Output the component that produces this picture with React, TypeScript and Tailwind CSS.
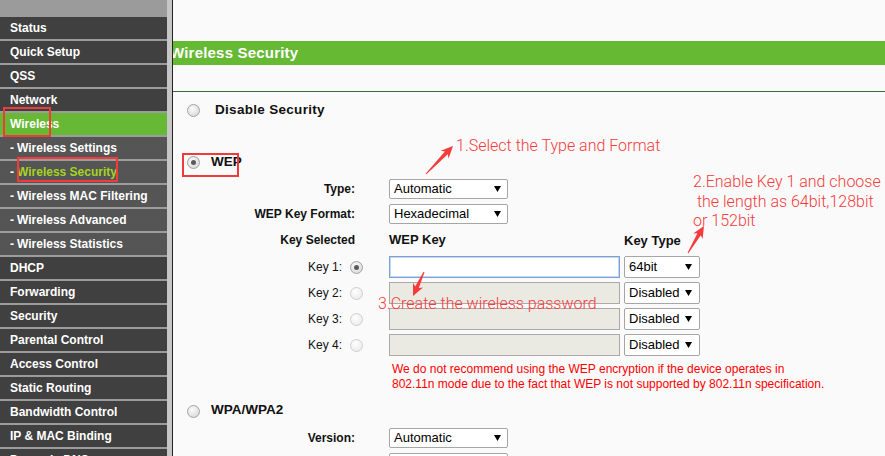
import React from "react";

type Pt = [number, number];

function arrowPoints(t: Pt, h: Pt): string {
  const [x1, y1] = t;
  const [x2, y2] = h;
  const dx = x2 - x1;
  const dy = y2 - y1;
  const L = Math.hypot(dx, dy);
  const ux = dx / L;
  const uy = dy / L;
  const px = -uy;
  const py = ux;
  const headLen = 12;
  const headW = 5.5;
  const neckW = 2;
  const tailW = 0.5;
  const nx = x2 - ux * headLen * 0.8;
  const ny = y2 - uy * headLen * 0.8;
  const bx = x2 - ux * headLen;
  const by = y2 - uy * headLen;
  const pts: Pt[] = [
    [x1 + px * tailW, y1 + py * tailW],
    [nx + px * neckW, ny + py * neckW],
    [bx + px * headW, by + py * headW],
    [x2, y2],
    [bx - px * headW, by - py * headW],
    [nx - px * neckW, ny - py * neckW],
    [x1 - px * tailW, y1 - py * tailW],
  ];
  return pts.map((p) => `${p[0].toFixed(1)},${p[1].toFixed(1)}`).join(" ");
}

function Radio({ checked, light }: { checked?: boolean; light?: boolean }) {
  return (
    <span
      className={
        light
          ? "w-[13px] h-[13px] rounded-full border border-[#cfcfcf] bg-[radial-gradient(circle_at_40%_35%,#ffffff,#e6e6e6)] flex items-center justify-center shrink-0"
          : "w-[13px] h-[13px] rounded-full border border-[#a4a4a4] bg-[radial-gradient(circle_at_40%_35%,#fbfbfb,#d2d2d2)] flex items-center justify-center shrink-0"
      }
    >
      {checked && <span className="w-[5px] h-[5px] rounded-full bg-[#5a5a5a]" />}
    </span>
  );
}

function Caret() {
  return (
    <svg width="7" height="6" viewBox="0 0 7 6" className="shrink-0">
      <path d="M0 0H7L3.5 6Z" fill="#000" />
    </svg>
  );
}

function BigSelect({ value }: { value: string }) {
  return (
    <div className="ml-[34px] w-[119px] h-[20px] bg-white border border-[#a6a6a6] rounded-[2px] flex items-center justify-between pl-[4px] pr-[6px] text-[13px] text-black">
      <span>{value}</span>
      <Caret />
    </div>
  );
}

function SmallSelect({ value }: { value: string }) {
  return (
    <div className="ml-[4px] w-[76px] h-[22px] bg-white border border-[#a6a6a6] rounded-[2px] flex items-center justify-between pl-[4px] pr-[7px] text-[13px] text-black">
      <span>{value}</span>
      <Caret />
    </div>
  );
}

const menu: { label: string; kind: "main" | "sub"; active?: boolean }[] = [
  { label: "Status", kind: "main" },
  { label: "Quick Setup", kind: "main" },
  { label: "QSS", kind: "main" },
  { label: "Network", kind: "main" },
  { label: "Wireless", kind: "main", active: true },
  { label: "Wireless Settings", kind: "sub" },
  { label: "Wireless Security", kind: "sub", active: true },
  { label: "Wireless MAC Filtering", kind: "sub" },
  { label: "Wireless Advanced", kind: "sub" },
  { label: "Wireless Statistics", kind: "sub" },
  { label: "DHCP", kind: "main" },
  { label: "Forwarding", kind: "main" },
  { label: "Security", kind: "main" },
  { label: "Parental Control", kind: "main" },
  { label: "Access Control", kind: "main" },
  { label: "Static Routing", kind: "main" },
  { label: "Bandwidth Control", kind: "main" },
  { label: "IP & MAC Binding", kind: "main" },
  { label: "Dynamic DNS", kind: "main" },
];

function MenuRow({ item }: { item: (typeof menu)[number] }) {
  if (item.kind === "main") {
    return (
      <div
        className={
          item.active
            ? "h-[24px] shrink-0 border-b-2 border-[#9c9c9c] bg-[#67b834] flex items-center pl-[10px] text-[12px] font-bold text-white"
            : "h-[24px] shrink-0 border-b-2 border-[#9c9c9c] bg-[#404040] flex items-center pl-[10px] text-[12px] font-bold text-white"
        }
      >
        {item.label}
      </div>
    );
  }
  return (
    <div className="h-[24px] shrink-0 border-b-2 border-[#9c9c9c] bg-[#555555] flex items-center pl-[10px] text-[12px] font-bold text-white whitespace-nowrap">
      <span className="mr-[3px]">-</span>
      <span className={item.active ? "text-[#a6d323]" : "text-white"}>{item.label}</span>
    </div>
  );
}

function KeyRow({ n, first }: { n: number; first?: boolean }) {
  return (
    <div className="h-[26px] shrink-0 flex items-center">
      <div className="w-[169px] text-right text-[12px] text-[#111]">Key {n}:</div>
      <span className="ml-[8px]">
        <Radio checked={first} light={!first} />
      </span>
      <div
        className={
          first
            ? "ml-[26px] w-[231px] h-[22px] bg-white border border-[#7da2d6] ring-1 ring-inset ring-[#c3d5ef]"
            : "ml-[26px] w-[231px] h-[22px] bg-[#eae9e2] border border-[#aaaaaa]"
        }
      />
      <SmallSelect value={first ? "64bit" : "Disabled"} />
    </div>
  );
}

export default function App() {
  const red = "#f53b3b";
  return (
    <div className="relative w-[885px] h-[456px] overflow-hidden flex font-['Liberation_Sans',Arial,sans-serif] bg-[#fafafa]">
      {/* Sidebar */}
      <div className="w-[167px] shrink-0 bg-[#9b9b9b] pt-[17px] flex flex-col overflow-hidden">
        {menu.map((m) => (
          <MenuRow key={m.label} item={m} />
        ))}
      </div>
      <div className="w-[5px] shrink-0 bg-[#c6c6c6]" />
      <div className="w-px shrink-0 bg-[#222222]" />

      {/* Content */}
      <div className="flex-1 flex flex-col overflow-hidden bg-[#fafafa]">
        <div className="h-[41px] shrink-0" />
        <div className="h-[24px] shrink-0 bg-[#66b933] flex items-center overflow-hidden">
          <span className="ml-[-3px] text-[15px] font-bold text-white whitespace-nowrap tracking-[0.2px]">Wireless Security</span>
        </div>
        <div className="h-[26px] shrink-0" />
        <div className="h-px shrink-0 bg-[#3a6b3e]" />

        <div className="mt-[6px] h-[24px] shrink-0 flex items-center pl-[14px]">
          <Radio />
          <span className="ml-[15px] text-[13.5px] font-bold text-[#111] tracking-[0.3px]">Disable Security</span>
        </div>

        <div className="mt-[28px] h-[24px] shrink-0 flex items-center pl-[14px]">
          <Radio checked />
          <span className="ml-[11px] text-[13.5px] font-bold text-[#111]">WEP</span>
        </div>

        <div className="mt-[2px] h-[25px] shrink-0 flex items-center">
          <div className="w-[182px] text-right text-[12px] font-bold text-[#111]">Type:</div>
          <BigSelect value="Automatic" />
        </div>
        <div className="h-[25px] shrink-0 flex items-center">
          <div className="w-[182px] text-right text-[12px] font-bold text-[#111]">WEP Key Format:</div>
          <BigSelect value="Hexadecimal" />
        </div>

        <div className="h-[28px] shrink-0 flex items-center">
          <div className="w-[182px] text-right text-[12px] font-bold text-[#111]">Key Selected</div>
          <div className="ml-[34px] w-[235px] text-[13px] font-bold text-[#111]">WEP Key</div>
          <div className="text-[13px] font-bold text-[#111] mt-[2px]">Key Type</div>
        </div>

        <KeyRow n={1} first />
        <KeyRow n={2} />
        <KeyRow n={3} />
        <KeyRow n={4} />

        <div className="mt-[4px] pl-[219px] text-[12px] leading-[15px] text-[#ff0000] whitespace-nowrap shrink-0">
          We do not recommend using the WEP encryption if the device operates in
          <br />
          802.11n mode due to the fact that WEP is not supported by 802.11n specification.
        </div>

        <div className="mt-[6px] h-[24px] shrink-0 flex items-center pl-[14px]">
          <span className="mt-[3px]">
            <Radio />
          </span>
          <span className="ml-[11px] text-[13.5px] font-bold text-[#111]">WPA/WPA2</span>
        </div>

        <div className="mt-[3px] h-[25px] shrink-0 flex items-center">
          <div className="w-[182px] text-right text-[12px] font-bold text-[#111]">Version:</div>
          <BigSelect value="Automatic" />
        </div>
        <div className="h-[25px] shrink-0 flex items-center">
          <div className="w-[182px] text-right text-[12px] font-bold text-[#111]">Encryption:</div>
          <BigSelect value="Automatic" />
        </div>
      </div>

      {/* Annotation overlay */}
      <div className="absolute left-[3px] top-[107px] w-[48px] h-[30px] border-2 border-[#f23a3a]" />
      <div className="absolute left-[17px] top-[157px] w-[101px] h-[25px] border-2 border-[#f23a3a]" />
      <div className="absolute left-[182px] top-[153px] w-[57px] h-[24px] border-2 border-[#f23a3a]" />

      <svg className="absolute left-0 top-0 pointer-events-none" width="885" height="456" viewBox="0 0 885 456">
        <polygon points={arrowPoints([426, 174], [453, 146])} fill={red} />
        <polygon points={arrowPoints([688, 253], [704, 226])} fill={red} />
        <polygon points={arrowPoints([424, 272], [413, 296])} fill={red} />
      </svg>

      <div className="absolute left-[456px] top-[136px] text-[16px] leading-[20px] font-light font-['Roboto',sans-serif] text-[#f53b3b] whitespace-nowrap">
        1.Select the Type and Format
      </div>
      <div className="absolute left-[693px] top-[172px] text-[16px] leading-[19.5px] font-light font-['Roboto',sans-serif] text-[#f53b3b] whitespace-pre">
        {"2.Enable Key 1 and choose\n the length as 64bit,128bit\nor 152bit"}
      </div>
      <div className="absolute left-[378px] top-[294px] text-[16px] leading-[20px] font-light font-['Roboto',sans-serif] text-[#f53b3b] whitespace-nowrap">
        3.Create the wireless password
      </div>
    </div>
  );
}
